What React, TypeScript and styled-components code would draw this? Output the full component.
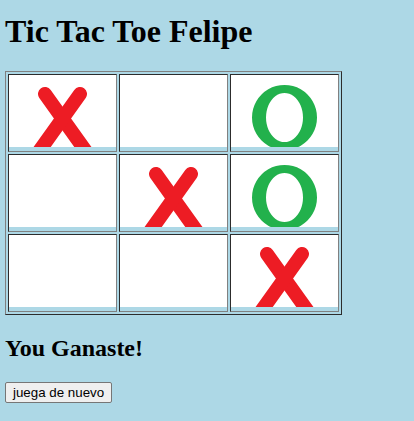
import React from "react";
import styled, { createGlobalStyle } from "styled-components";

const Global = createGlobalStyle`
  html, body {
    margin: 0;
    padding: 0;
    background: #add8e6;
  }
  body {
    font-family: "Liberation Serif", "Times New Roman", serif;
    color: #000;
  }
`;

const Page = styled.div`
  padding: 0 5px;
  display: flow-root;
`;

const Title = styled.h1`
  font-size: 32px;
  font-weight: bold;
  margin: 13px 0 21px;
`;

const Board = styled.table`
  border: 1px outset grey;
  border-spacing: 2px;
  border-collapse: separate;
`;

const Cell = styled.td`
  border: 1px inset grey;
  padding: 0 0 4px 0;
  background: #add8e6;
`;

const Tile = styled.div`
  width: 107px;
  height: 72px;
  background: #fff;
  overflow: hidden;
`;

const Message = styled.h2`
  font-size: 24px;
  font-weight: bold;
  margin: 20px 0;
`;

const Button = styled.button`
  font-family: "Liberation Sans", Arial, sans-serif;
  font-size: 13.333px;
  padding: 2px 7px;
  border: 1px solid #767676;
  border-radius: 2px;
  background: #efefef;
  color: #000;
  line-height: normal;
`;

type Mark = "X" | "O" | null;

const MarkX = () => (
  <svg width="107" height="72" viewBox="0 0 107 72">
    <g stroke="#ed1c24" strokeWidth="14" strokeLinecap="round">
      <line x1="36" y1="19" x2="81" y2="82" />
      <line x1="71" y1="19" x2="26" y2="82" />
    </g>
  </svg>
);

const MarkO = () => (
  <svg width="107" height="72" viewBox="0 0 107 72">
    <path
      fillRule="evenodd"
      fill="#22b14c"
      d="M53.5 10 a32.5 32.5 0 1 0 0.01 0 Z M53.5 18 a18.5 24.5 0 1 0 0.01 0 Z"
    />
  </svg>
);

const board: Mark[][] = [
  ["X", null, "O"],
  [null, "X", "O"],
  [null, null, "X"],
];

export default function App() {
  return (
    <Page>
      <Global />
      <Title>Tic Tac Toe Felipe</Title>
      <Board>
        <tbody>
          {board.map((row, r) => (
            <tr key={r}>
              {row.map((m, c) => (
                <Cell key={c}>
                  <Tile>{m === "X" ? <MarkX /> : m === "O" ? <MarkO /> : null}</Tile>
                </Cell>
              ))}
            </tr>
          ))}
        </tbody>
      </Board>
      <Message>You Ganaste!</Message>
      <Button>juega de nuevo</Button>
    </Page>
  );
}
